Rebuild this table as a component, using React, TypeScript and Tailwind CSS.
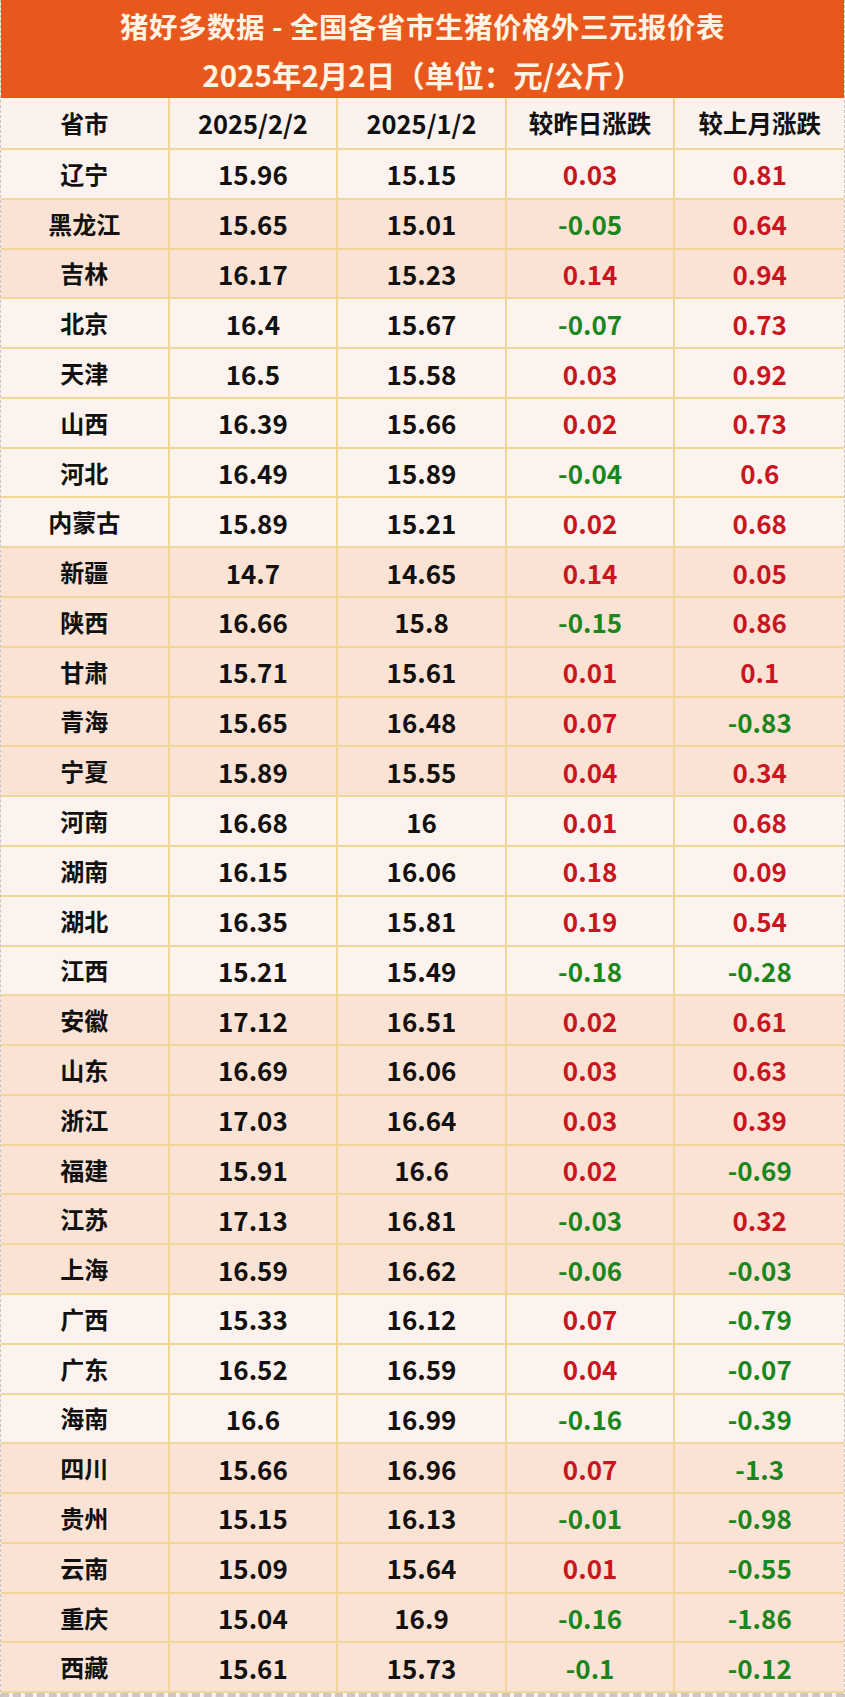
import React from "react";

type Row = [string, string, string, string, string, boolean];

const rows: Row[] = [
  ["辽宁", "15.96", "15.15", "0.03", "0.81", false],
  ["黑龙江", "15.65", "15.01", "-0.05", "0.64", true],
  ["吉林", "16.17", "15.23", "0.14", "0.94", true],
  ["北京", "16.4", "15.67", "-0.07", "0.73", false],
  ["天津", "16.5", "15.58", "0.03", "0.92", false],
  ["山西", "16.39", "15.66", "0.02", "0.73", false],
  ["河北", "16.49", "15.89", "-0.04", "0.6", false],
  ["内蒙古", "15.89", "15.21", "0.02", "0.68", false],
  ["新疆", "14.7", "14.65", "0.14", "0.05", true],
  ["陕西", "16.66", "15.8", "-0.15", "0.86", true],
  ["甘肃", "15.71", "15.61", "0.01", "0.1", true],
  ["青海", "15.65", "16.48", "0.07", "-0.83", true],
  ["宁夏", "15.89", "15.55", "0.04", "0.34", true],
  ["河南", "16.68", "16", "0.01", "0.68", false],
  ["湖南", "16.15", "16.06", "0.18", "0.09", false],
  ["湖北", "16.35", "15.81", "0.19", "0.54", false],
  ["江西", "15.21", "15.49", "-0.18", "-0.28", false],
  ["安徽", "17.12", "16.51", "0.02", "0.61", true],
  ["山东", "16.69", "16.06", "0.03", "0.63", true],
  ["浙江", "17.03", "16.64", "0.03", "0.39", true],
  ["福建", "15.91", "16.6", "0.02", "-0.69", true],
  ["江苏", "17.13", "16.81", "-0.03", "0.32", true],
  ["上海", "16.59", "16.62", "-0.06", "-0.03", true],
  ["广西", "15.33", "16.12", "0.07", "-0.79", false],
  ["广东", "16.52", "16.59", "0.04", "-0.07", false],
  ["海南", "16.6", "16.99", "-0.16", "-0.39", false],
  ["四川", "15.66", "16.96", "0.07", "-1.3", true],
  ["贵州", "15.15", "16.13", "-0.01", "-0.98", true],
  ["云南", "15.09", "15.64", "0.01", "-0.55", true],
  ["重庆", "15.04", "16.9", "-0.16", "-1.86", true],
  ["西藏", "15.61", "15.73", "-0.1", "-0.12", true],
];

const font = {
  fontFamily: '"Noto Sans CJK SC", "Noto Sans", sans-serif',
};

function Change({ v }: { v: string }) {
  const neg = v.startsWith("-");
  return (
    <span className={neg ? "text-[#1b861d]" : "text-[#c9151e]"}>{v}</span>
  );
}

const cell = "flex items-center justify-center";
const sep = " border-r-2 border-[#f1d797]";

export default function App() {
  return (
    <div
      className="w-[845px] h-[1697px] flex flex-col bg-[#fdf2ec] border-x border-dashed border-[#c9c2bd]"
      style={font}
    >
      <div className="h-[98px] shrink-0 bg-[#e8581c] flex flex-col items-center text-[#fff4e4] font-bold">
        <div className="h-[50px] flex items-center pt-[2px] text-[28.5px] leading-none tracking-[0.5px]">
          猪好多数据 - 全国各省市生猪价格外三元报价表
        </div>
        <div className="h-[48px] flex items-start pt-[10px] text-[29.5px] leading-none">
          2025年2月2日（单位：元/公斤）
        </div>
      </div>
      <div className="h-[52px] shrink-0 grid grid-cols-5 bg-[#fcf2ed] border-b-2 border-[#f1d797] font-bold text-[#111]">
        <div className={cell + sep + " text-[24px]"}>省市</div>
        <div className={cell + sep + " text-[25.5px]"}>2025/2/2</div>
        <div className={cell + sep + " text-[25.5px]"}>2025/1/2</div>
        <div className={cell + sep + " text-[24.5px]"}>较昨日涨跌</div>
        <div className={cell + " text-[24.5px]"}>较上月涨跌</div>
      </div>
      <div className="flex-1 flex flex-col border-b-4 border-dashed border-[#cfc6c0]">
        {rows.map((r) => (
          <div
            key={r[0]}
            className={
              "flex-1 grid grid-cols-5 border-b-2 border-[#f1d797] text-[26px] font-bold text-[#111] " +
              (r[5] ? "bg-[#fae2d5]" : "bg-[#fdf3ee]")
            }
          >
            <div className={cell + sep + " text-[24px]"}>{r[0]}</div>
            <div className={cell + sep}>{r[1]}</div>
            <div className={cell + sep}>{r[2]}</div>
            <div className={cell + sep}>
              <Change v={r[3]} />
            </div>
            <div className={cell}>
              <Change v={r[4]} />
            </div>
          </div>
        ))}
      </div>
    </div>
  );
}
